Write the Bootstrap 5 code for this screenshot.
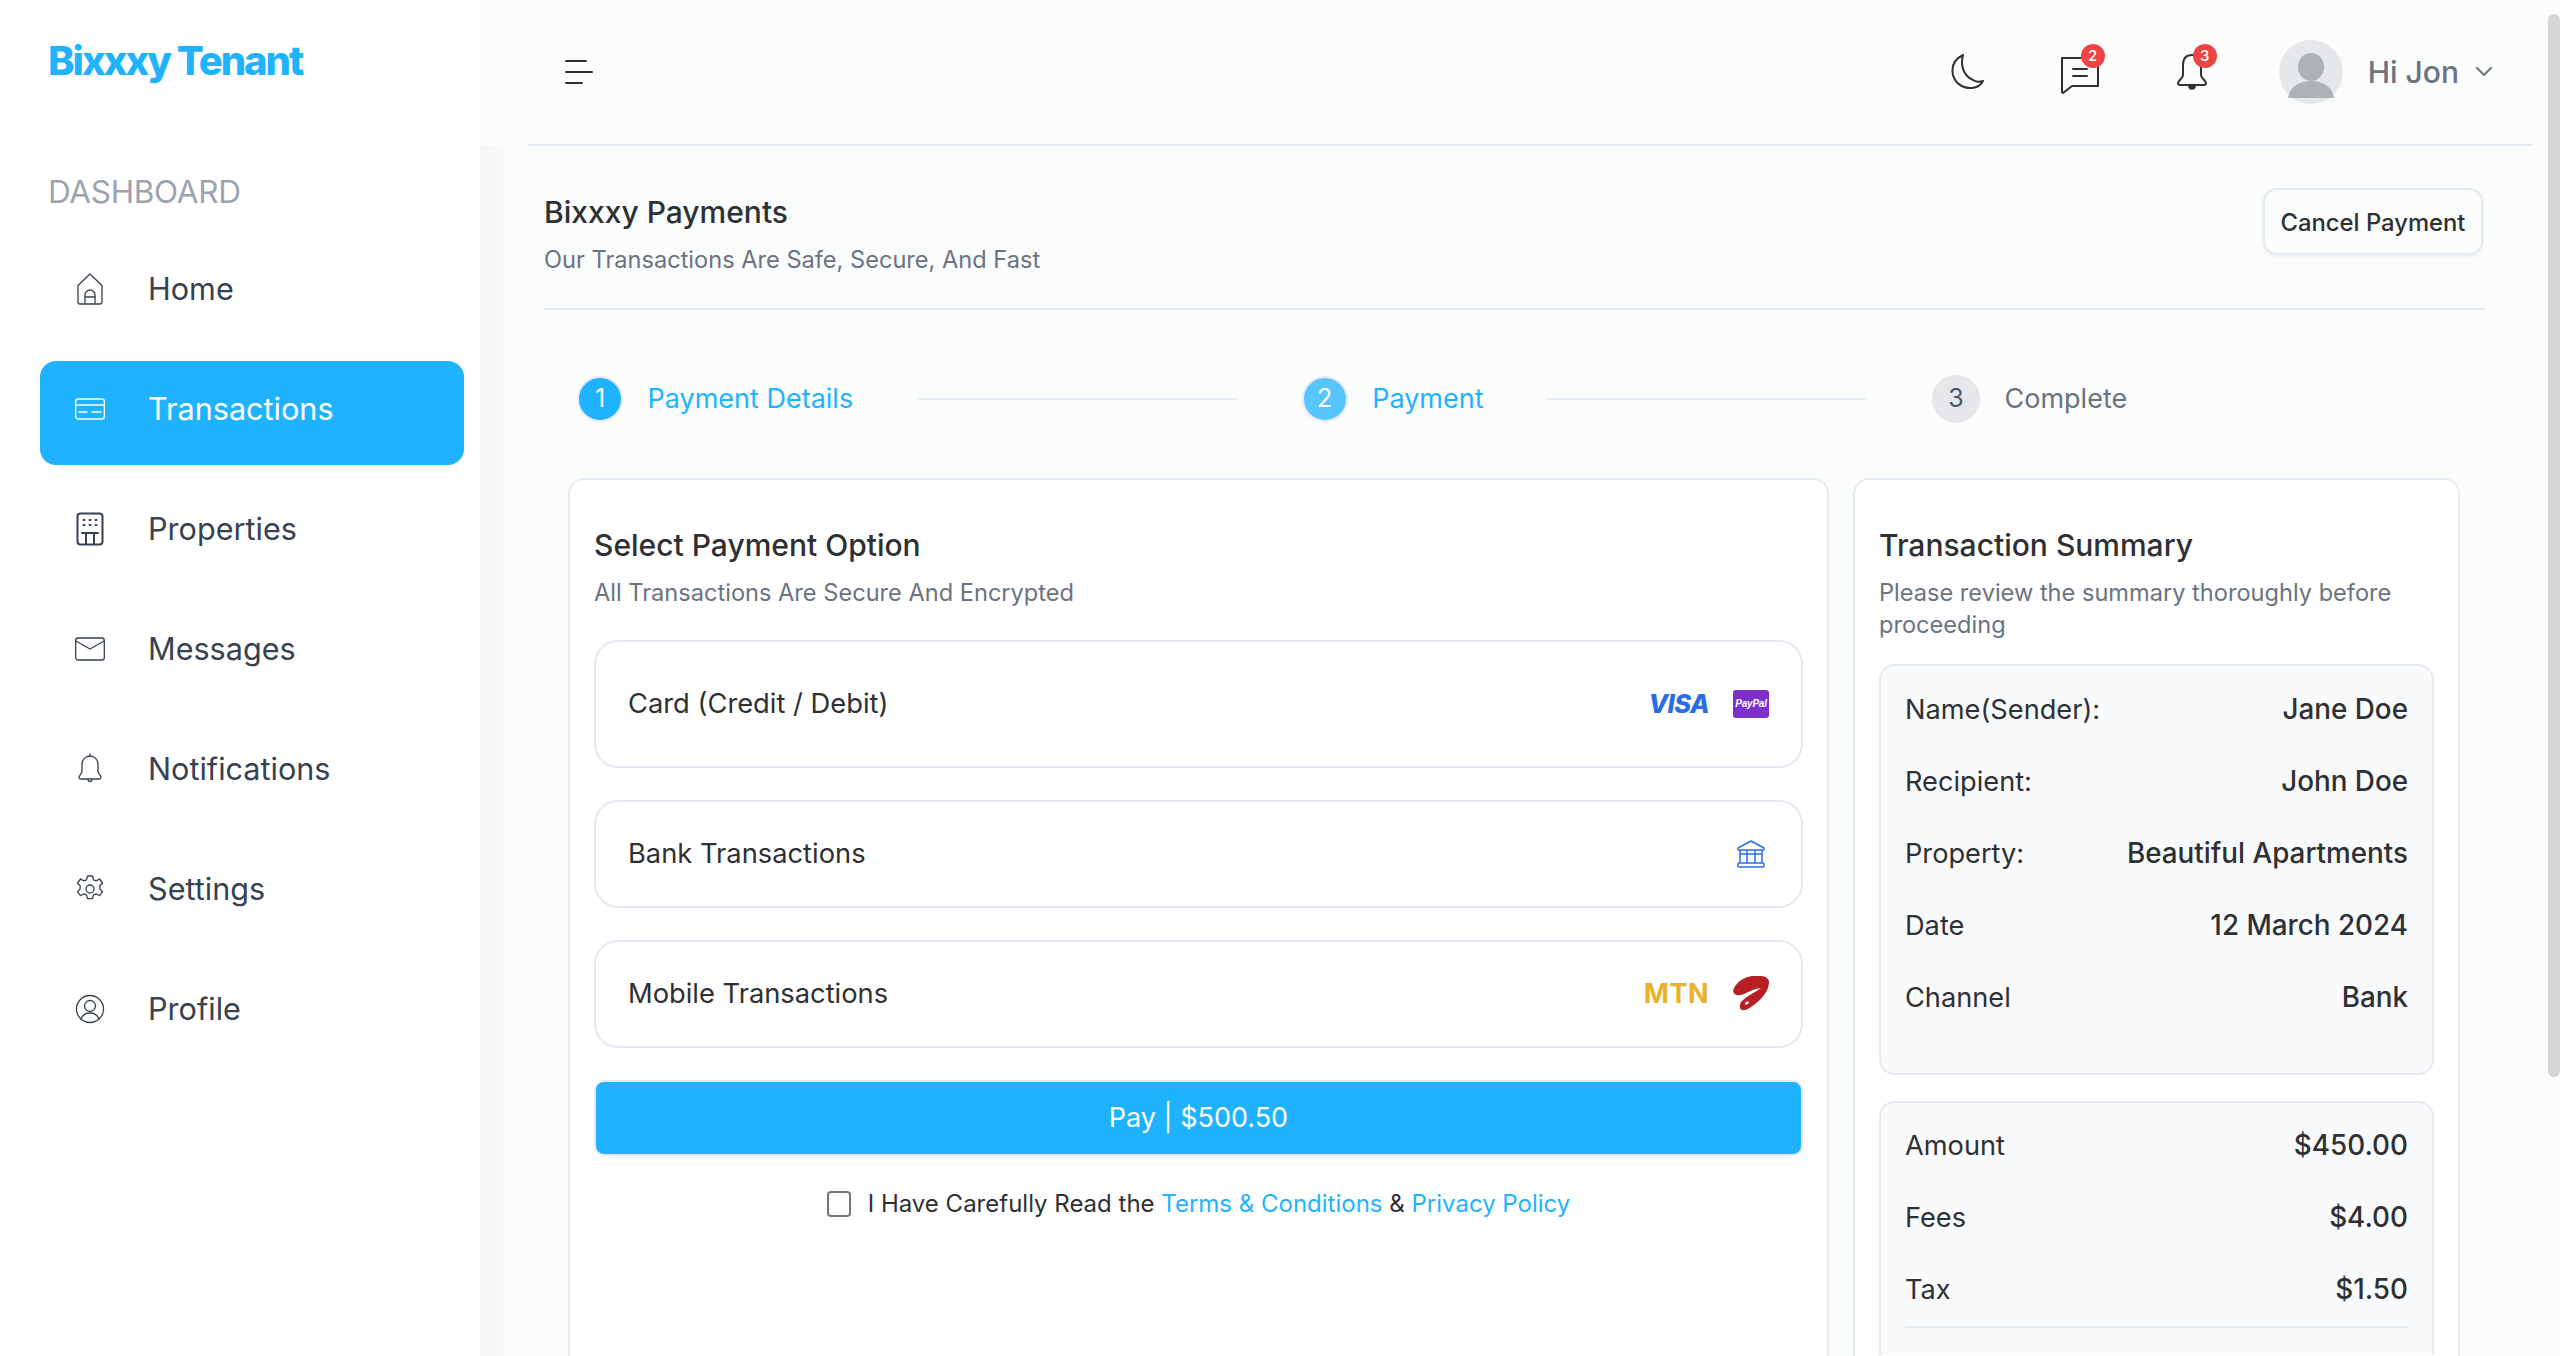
<!DOCTYPE html>
<html>
  <head>
    <title>Bixxxy Tenant</title>
    <link href="https://cdn.jsdelivr.net/npm/bootstrap@5.3.3/dist/css/bootstrap.min.css" rel="stylesheet" />
    <script src="https://cdn.jsdelivr.net/npm/bootstrap@5.3.3/dist/js/bootstrap.bundle.min.js"></script>
    <style>
      html, body { height: 1356px; overflow: hidden; }
      body { font-family: "Inter", "Liberation Sans", sans-serif; background: #fbfcfc; color: #2e3033; }

      /* sidebar */
      .side-bar { width: 480px; height: 1356px; background: #fff; flex-shrink: 0; padding: 0 16px 0 40px; }
      .side-logo { color: #1fb3ff; font-size: 40px; font-weight: 800; letter-spacing: -2px; height: 122px; line-height: 122px; padding-left: 8px; }
      .side-title { color: #9ca3af; font-size: 31.5px; line-height: 40px; margin: 50px 0 0 8px; letter-spacing: -0.3px; }
      .side-menu { margin-top: 29px; gap: 16px; }
      .side-link { height: 104px; width: 424px; border-radius: 16px; color: #374151; font-size: 30.6px; padding: 0 0 8px 35px; gap: 43px; text-decoration: none; }
      .side-link.is-on { background: #1fb3ff; color: #fff; }
      .side-ico { width: 30px; height: 36px; flex-shrink: 0; fill: none; stroke: currentColor; stroke-width: 1.3; stroke-linejoin: round; stroke-linecap: round; }

      /* top bar */
      .main-wrap { min-width: 0; }
      .top-bar { height: 146px; margin-left: 48px; margin-right: 28px; border-bottom: 2px solid #e5e9f2; padding: 0 40px 0 36px; }
      .top-ico { fill: none; stroke: #2e3033; stroke-width: 2; stroke-linejoin: round; stroke-linecap: round; display: block; }
      .top-btn { position: relative; width: 40px; height: 40px; }
      .top-count { position: absolute; top: -8px; width: 24px; height: 24px; border-radius: 50%; background: #ef4444; color: #fff; font-size: 15px; font-weight: 500; line-height: 24px; text-align: center; }
      .chat-btn { margin-left: 75px; }
      .chat-btn .top-count { left: 21px; }
      .bell-btn { margin-left: 76px; width: 32px; }
      .bell-btn .top-count { left: 17px; }
      .user-pic { width: 64px; height: 64px; margin-left: 71px; }
      .user-name { color: #6b7280; font-size: 30px; font-weight: 500; margin-left: 25px; }
      .chev-ico { margin-left: 17px; }

      /* content */
      .page-area { padding: 0 75px 0 64px; background: linear-gradient(90deg, #f3f5f6 0, #fbfcfc 32px); flex: 1; overflow: hidden; }
      .page-head { height: 164px; border-bottom: 2px solid #e5e9f2; padding-top: 42px; }
      .page-title { font-size: 30px; font-weight: 500; line-height: 40px; margin: 4px 0 0; }
      .page-sub { color: #6b7280; font-size: 23.6px; line-height: 32px; margin: 12px 0 0; }
      .cancel-btn { width: 220px; height: 67px; margin-right: 2px; background: #fbfcfc; border: 2px solid #e5e9f2; border-radius: 14px; font-size: 23.8px; font-weight: 500; color: #2e3033; box-shadow: 0 2px 4px rgba(30, 40, 80, .06); padding: 2px 0 0; }

      .step-row { height: 168px; padding: 10px 0 0 33px; gap: 63.5px; }
      .step-item { gap: 24.5px; font-size: 27px; color: #1fb3ff; }
      .step-num { width: 46px; height: 46px; border-radius: 50%; background: #1fb3ff; color: #fff; border: 2px solid #e5e9f2; font-size: 25px; display: flex; align-items: center; justify-content: center; }
      .step-num.is-half { background: #57c5ff; }
      .step-num.is-off { width: 48px; height: 48px; background: #e5e7eb; color: #4b5563; border: 0; }
      .step-item.is-off { color: #6b7280; }
      .step-line { width: 320px; height: 2px; background: #e5e9f2; margin-right: 1.5px; }

      .pay-row { padding-left: 24px; gap: 24px; }
      .box-card { background: #fff; border: 2px solid #e5e9f2; border-bottom: 0; border-radius: 16px 16px 0 0; height: 878px; padding: 45px 24px 0; overflow: hidden; }
      .box-left { width: 1261px; }
      .box-right { width: 607px; }
      .box-title { font-size: 30px; font-weight: 500; line-height: 40px; margin: 0; }
      .box-sub { color: #6b7280; font-size: 23.6px; line-height: 32px; margin: 12px 0 0; }

      .opt-list { gap: 32px; margin-top: 31px; }
      .opt-item { border: 2px solid #e5e9f2; border-radius: 24px; padding: 0 32px; font-size: 27.3px; }
      .opt-tall { height: 128px; }
      .opt-low { height: 108px; }
      .bank-ico { margin-right: 4px; }
      .visa-mark { color: #2b6de8; font-size: 25.5px; font-weight: 800; font-style: italic; letter-spacing: -0.6px; }
      .paypal-mark { width: 36px; height: 28px; background: #7d2fc9; border-radius: 3px; color: #fff; font-family: "Liberation Sans", sans-serif; font-size: 10px; font-weight: 700; font-style: italic; line-height: 28px; text-align: center; letter-spacing: -0.2px; }
      .mtn-mark { color: #e9b02b; font-size: 27px; font-weight: 700; letter-spacing: 0.5px; }
      .opt-logos { gap: 24px; }

      .pay-btn { display: block; width: 100%; height: 76px; margin-top: 32px; background: #1fb3ff; border: 2px solid #e5e9f2; border-radius: 10px; color: #fff; font-size: 27px; }
      .pay-btn:hover { background: #1fb3ff; color: #fff; }
      .agree-row { margin-top: 30px; font-size: 24px; gap: 17px; }
      .agree-row .form-check-input { width: 24px; height: 26px; margin: 0; border: 2px solid #757575; border-radius: 4px; }
      .agree-row a { color: #1fb3ff; text-decoration: none; }

      .sum-box { background: #f9fafc; border: 2px solid #e5e9f2; border-radius: 16px; padding: 0 24px; }
      .sum-one { height: 411px; margin-top: 23px; padding-top: 8px; }
      .sum-two { height: 254px; margin-top: 26px; padding-top: 7px; border-bottom: 0; border-radius: 16px 16px 0 0; }
      .sum-row { height: 72px; font-size: 27.2px; color: #2e3033; }
      .sum-row strong { font-weight: 500; font-size: 27.8px; }
      .sum-rule { border-top: 2px solid #e5e9f2; }

      .scroll-thumb { position: absolute; top: 14px; right: 0; width: 12px; height: 1063px; background: #d6d6d6; border-radius: 6px; }
    </style>
  </head>
  <body>
    <div class="d-flex">
      <aside class="side-bar">
        <div class="side-logo">Bixxxy Tenant</div>
        <div class="side-title">DASHBOARD</div>
        <nav class="side-menu d-flex flex-column">
          <a class="side-link d-flex align-items-center" href="#">
            <svg class="side-ico" viewBox="0 0 30 36"><path d="M3 14.500 15 3l12 11.500V31a2 2 0 0 1-2 2H5a2 2 0 0 1-2-2z"/><path d="M10 33V24a5 5 0 0 1 10 0v9"/><path d="M10 26h10"/></svg>
            Home
          </a>
          <a class="side-link is-on d-flex align-items-center" href="#">
            <svg class="side-ico" viewBox="0 0 30 36"><rect x="0.700" y="8" width="28.600" height="20" rx="2.500"/><path d="M1 14h28"/><path d="M4 21h8M17 21h9"/></svg>
            Transactions
          </a>
          <a class="side-link d-flex align-items-center" href="#">
            <svg class="side-ico" viewBox="0 0 30 36"><rect x="2.500" y="2.500" width="25" height="31" rx="3" stroke-width="2"/><path d="M8.500 9h1M14.500 9h1M20.500 9h1M8.500 14h1M14.500 14h1M20.500 14h1" stroke-width="2"/><path d="M7 22h16M11 33V22M19 33V22" stroke-width="2"/></svg>
            Properties
          </a>
          <a class="side-link d-flex align-items-center" href="#">
            <svg class="side-ico" viewBox="0 0 30 36"><rect x="0.700" y="7" width="28.600" height="22" rx="2.500"/><path d="M1 10l14 8 14-8"/></svg>
            Messages
          </a>
          <a class="side-link d-flex align-items-center" href="#">
            <svg class="side-ico" viewBox="0 0 30 36"><path d="M15 5a8 8 0 0 0-8 8v7c0 3-3 4-3 6.500 0 .8.500 1.500 1.500 1.500h19c1 0 1.500-.7 1.500-1.500 0-2.500-3-3.500-3-6.500v-7a8 8 0 0 0-8-8z"/><path d="M13 28.500a2 2 0 0 0 4 0M15 3v2"/></svg>
            Notifications
          </a>
          <a class="side-link d-flex align-items-center" href="#">
            <svg class="side-ico" viewBox="0 0 30 36"><circle cx="15" cy="18" r="4"/><path d="M12.500 5h5l1 3.800 2.600 1.100 3.400-1.900 3 4-2.700 2.800.2 3-.2 0 2.700 2.900-3 4-3.400-1.900-2.600 1.100-1 3.800h-5l-1-3.800-2.600-1.100-3.400 1.900-3-4 2.700-2.900-.1-1.500.1-1.500-2.700-2.800 3-4 3.400 1.900 2.600-1.100z"/></svg>
            Settings
          </a>
          <a class="side-link d-flex align-items-center" href="#">
            <svg class="side-ico" viewBox="0 0 30 36"><circle cx="15" cy="18" r="13.500"/><circle cx="15" cy="15" r="5.500"/><path d="M6 28c1.500-4 5-6 9-6s7.500 2 9 6"/></svg>
            Profile
          </a>
        </nav>
      </aside>

      <div class="main-wrap flex-grow-1 d-flex flex-column">
        <header class="top-bar d-flex align-items-center">
          <svg class="top-ico" width="30" height="28" viewBox="0 0 30 28"><path d="M2 3h20M2 14h26M2 25h16"/></svg>
          <div class="ms-auto d-flex align-items-center top-tools">
            <svg class="top-ico moon-ico" width="36" height="38" viewBox="0 0 36 38"><path d="M14 2C6 6 2 13 4 22c2 8 10 14 19 13 5-.5 9-3 11-7-3 1-7 1-10-1C15 23 11 13 14 2z"/></svg>
            <div class="top-btn chat-btn">
              <svg class="top-ico" width="40" height="42" viewBox="0 0 40 42"><path d="M2 6h36v28H12l-9 7-1-1z"/><path d="M13 17h14M13 24h14"/></svg>
              <span class="top-count">2</span>
            </div>
            <div class="top-btn bell-btn">
              <svg class="top-ico" width="32" height="38" viewBox="0 0 32 38"><path d="M16 3c-6 0-9 4-9 10v10c0 3-5 6-5 8s1 2 2 2h24c1 0 2 0 2-2s-5-5-5-8V13c0-6-3-10-9-10z"/><path d="M13 33c0 5 6 5 6 0" fill="#2e3033"/></svg>
              <span class="top-count">3</span>
            </div>
            <svg class="user-pic" viewBox="0 0 64 64"><circle cx="32" cy="32" r="32" fill="#e5e7eb"/><ellipse cx="32" cy="27" rx="13" ry="14" fill="#adb2b7"/><path d="M9 58c2-12 12-17 23-17s21 5 23 17z" fill="#adb2b7"/></svg>
            <span class="user-name">Hi Jon</span>
            <svg class="top-ico chev-ico" width="16" height="10" viewBox="0 0 16 10"><path d="M1 1l7 7 7-7" stroke="#6b7280"/></svg>
          </div>
        </header>

        <main class="page-area">
          <div class="page-head d-flex justify-content-between align-items-start">
            <div class="head-text">
              <h1 class="page-title">Bixxxy Payments</h1>
              <p class="page-sub">Our Transactions Are Safe, Secure, And Fast</p>
            </div>
            <button type="button" class="btn cancel-btn text-nowrap">Cancel Payment</button>
          </div>

          <div class="step-row d-flex align-items-center">
            <div class="step-item d-flex align-items-center"><span class="step-num">1</span>Payment Details</div>
            <div class="step-line"></div>
            <div class="step-item d-flex align-items-center"><span class="step-num is-half">2</span>Payment</div>
            <div class="step-line"></div>
            <div class="step-item is-off d-flex align-items-center"><span class="step-num is-off">3</span>Complete</div>
          </div>

          <div class="pay-row d-flex align-items-start">
            <section class="box-card box-left">
              <h2 class="box-title">Select Payment Option</h2>
              <p class="box-sub">All Transactions Are Secure And Encrypted</p>
              <div class="opt-list d-flex flex-column">
                <div class="opt-item opt-tall d-flex align-items-center justify-content-between">
                  <span>Card (Credit / Debit)</span>
                  <div class="opt-logos d-flex align-items-center"><span class="visa-mark">VISA</span><span class="paypal-mark">PayPal</span></div>
                </div>
                <div class="opt-item opt-low d-flex align-items-center justify-content-between">
                  <span>Bank Transactions</span>
                  <svg class="bank-ico" width="28" height="28" viewBox="0 0 28 28" fill="none" stroke="#2b6de8" stroke-width="1.500" stroke-linejoin="round"><path d="M14 1 1 8v2h26V8z"/><path d="M3 10v13M10 10v13M18 10v13M25 10v13M3 14h22"/><rect x="1" y="23" width="26" height="4" rx="1"/></svg>
                </div>
                <div class="opt-item opt-low d-flex align-items-center justify-content-between">
                  <span>Mobile Transactions</span>
                  <div class="opt-logos d-flex align-items-center">
                    <span class="mtn-mark">MTN</span>
                    <svg width="36" height="36" viewBox="0 0 36 36"><path fill="#b81f24" fill-rule="evenodd" d="M0 15C2 7 11 0 21 0c7-.5 15 0 15 6 0 8-6 16-14 22-5 4-10 7-13 6-3-1-3-7 1-10 3-2.500 8-6 13-8.500L28 12c-6 .5-11 3-16 5.500-5 2.500-11 2.500-12-2.500zM13 26c2-1.500 3.500 0 2.500 1.500s-3.500 1.500-3.500 0c0-.5.5-1 1-1.500z"/></svg>
                  </div>
                </div>
              </div>
              <button type="button" class="btn pay-btn">Pay | $500.50</button>
              <div class="agree-row d-flex align-items-center justify-content-center">
                <input class="form-check-input" type="checkbox" />
                <span>I Have Carefully Read the <a href="#">Terms &amp; Conditions</a> &amp; <a href="#">Privacy Policy</a></span>
              </div>
            </section>

            <section class="box-card box-right">
              <h2 class="box-title">Transaction Summary</h2>
              <p class="box-sub">Please review the summary thoroughly before proceeding</p>
              <div class="sum-box sum-one">
                <div class="sum-row d-flex align-items-center justify-content-between"><span>Name(Sender):</span><strong>Jane Doe</strong></div>
                <div class="sum-row d-flex align-items-center justify-content-between"><span>Recipient:</span><strong>John Doe</strong></div>
                <div class="sum-row d-flex align-items-center justify-content-between"><span>Property:</span><strong>Beautiful Apartments</strong></div>
                <div class="sum-row d-flex align-items-center justify-content-between"><span>Date</span><strong>12 March 2024</strong></div>
                <div class="sum-row d-flex align-items-center justify-content-between"><span>Channel</span><strong>Bank</strong></div>
              </div>
              <div class="sum-box sum-two">
                <div class="sum-row d-flex align-items-center justify-content-between"><span>Amount</span><strong>$450.00</strong></div>
                <div class="sum-row d-flex align-items-center justify-content-between"><span>Fees</span><strong>$4.00</strong></div>
                <div class="sum-row d-flex align-items-center justify-content-between"><span>Tax</span><strong>$1.50</strong></div>
                <div class="sum-rule"></div>
              </div>
            </section>
          </div>
        </main>
      </div>
    </div>
    <div class="scroll-thumb"></div>
  </body>
</html>
